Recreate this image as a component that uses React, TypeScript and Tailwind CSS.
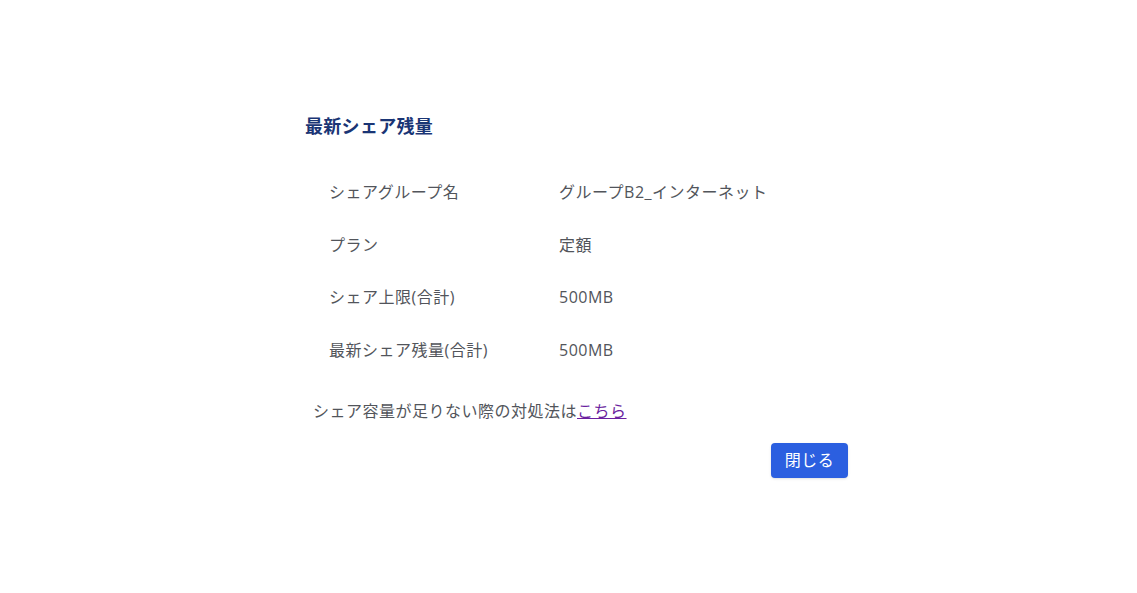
export default function App() {
  const rows = [
    ["シェアグループ名", "グループB2_インターネット"],
    ["プラン", "定額"],
    ["シェア上限(合計)", "500MB"],
    ["最新シェア残量(合計)", "500MB"],
  ];
  return (
    <div
      className="w-[1137px] h-[593px] bg-white"
      style={{ fontFamily: '"Open Sans", "Noto Sans CJK JP", sans-serif' }}
    >
      <div className="ml-[305px] w-[544px] pt-[113px]">
        <h2 className="text-[18px] leading-[26px] font-bold text-[#1a3575] tracking-[0.3px]">最新シェア残量</h2>
        <div className="mt-[41px] pl-[24px] flex flex-col gap-[28.5px]">
          {rows.map(([k, v]) => (
            <div key={k} className="flex text-[16px] leading-[24px] text-[#52555b] tracking-[0.5px]">
              <div className="w-[230px]">{k}</div>
              <div>{v}</div>
            </div>
          ))}
        </div>
        <p className="mt-[37px] ml-[8px] text-[16px] leading-[24px] text-[#52555b] tracking-[0.5px]">
          シェア容量が足りない際の対処法は
          <a href="#" className="text-[#6b1fa0] underline">こちら</a>
        </p>
        <div className="mt-[20px] flex justify-end">
          <button className="mr-[1px] w-[77px] h-[35px] rounded-[4px] bg-[#2b5fe0] text-white text-[16px] tracking-[0.5px] shadow-sm">
            閉じる
          </button>
        </div>
      </div>
    </div>
  );
}
